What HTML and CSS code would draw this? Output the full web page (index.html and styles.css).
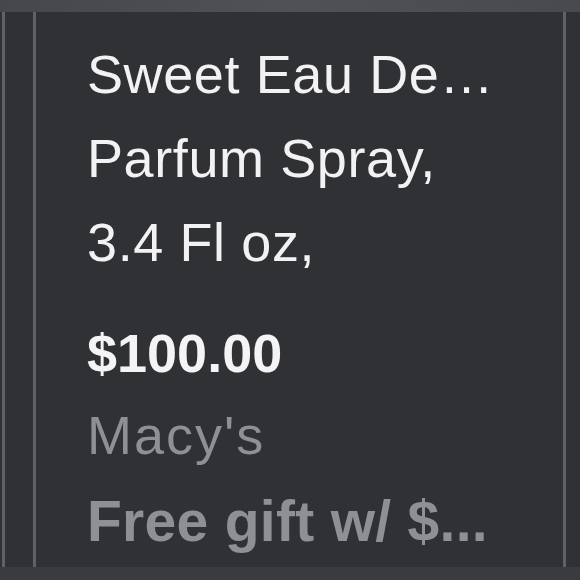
FILE: index.html
```html
<!DOCTYPE html>
<html>
<head>
<meta charset="utf-8">
<link rel="stylesheet" href="styles.css">
</head>
<body>
<div class="screen">
  <div class="topbar"></div>
  <div class="main">
    <div class="gutter"></div>
    <div class="rule"></div>
    <div class="spacer"></div>
    <div class="rule"></div>
    <div class="content">
      <div class="title first">Ariana Grande Cloud Eau</div>
      <div class="title">Sweet Eau De…</div>
      <div class="title">Parfum Spray,</div>
      <div class="title">3.4 Fl oz,</div>
      <div class="price">$100.00</div>
      <div class="store">Macy's</div>
      <div class="promo">Free gift w/ $...</div>
    </div>
    <div class="rule"></div>
    <div class="tail"></div>
  </div>
  <div class="bottombar"></div>
</div>
</body>
</html>
```

FILE: styles.css
```css
html, body {
  margin: 0;
  padding: 0;
  background: #303135;
}
.screen {
  width: 580px;
  height: 580px;
  display: flex;
  flex-direction: column;
  overflow: hidden;
  font-family: "Liberation Sans", Arial, sans-serif;
}
.topbar {
  height: 12px;
  flex: none;
  background: linear-gradient(90deg, #46474a 0%, #505154 50%, #494a4d 100%);
}
.main {
  height: 555px;
  flex: none;
  display: flex;
  background: #303135;
  overflow: hidden;
}
.gutter { width: 2px; flex: none; }
.spacer { width: 28px; flex: none; }
.tail { flex: 1; }
.rule {
  width: 3px;
  flex: none;
  background: #606165;
}
.content {
  width: 527px;
  flex: none;
  padding-left: 51px;
  box-sizing: border-box;
  margin-top: -61px;
  white-space: nowrap;
  overflow: hidden;
}
.title {
  font-size: 54px;
  line-height: 84px;
  color: #f2f2f4;
  letter-spacing: 0.6px;
}
.title.first {
  line-height: 81px;
}
.price {
  font-size: 54px;
  line-height: 84px;
  font-weight: bold;
  color: #f4f4f6;
  margin-top: 27px;
}
.store {
  font-size: 54px;
  line-height: 84px;
  color: #8e9096;
  letter-spacing: 2px;
  margin-top: -2px;
}
.promo {
  font-size: 57px;
  line-height: 84px;
  font-weight: bold;
  color: #8e9096;
  letter-spacing: 0.3px;
  margin-top: 2px;
}
.bottombar {
  height: 13px;
  flex: none;
  background: #3a3b3e;
}
```
